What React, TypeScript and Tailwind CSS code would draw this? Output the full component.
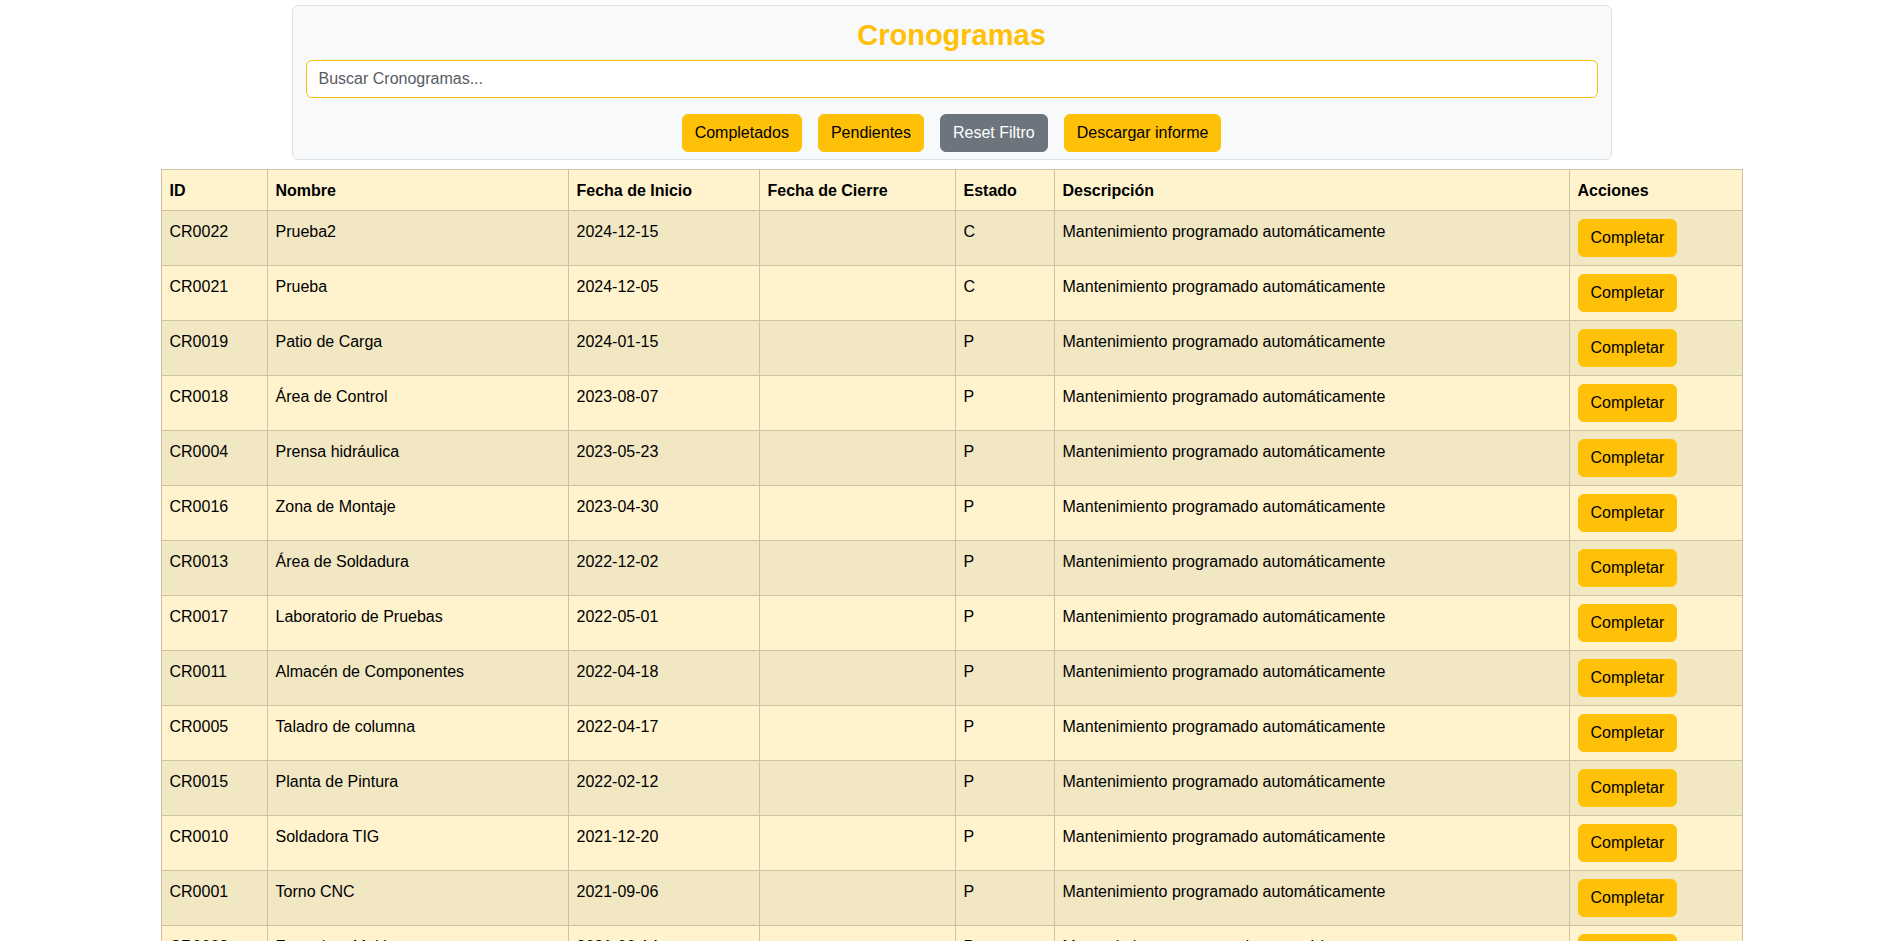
import { useState } from 'react';

type Cronograma = {
  id: string;
  nombre: string;
  inicio: string;
  cierre: string;
  estado: 'C' | 'P';
  descripcion: string;
};

const DESC = 'Mantenimiento programado automáticamente';

const cronogramas: Cronograma[] = [
  { id: 'CR0022', nombre: 'Prueba2', inicio: '2024-12-15', cierre: '', estado: 'C', descripcion: DESC },
  { id: 'CR0021', nombre: 'Prueba', inicio: '2024-12-05', cierre: '', estado: 'C', descripcion: DESC },
  { id: 'CR0019', nombre: 'Patio de Carga', inicio: '2024-01-15', cierre: '', estado: 'P', descripcion: DESC },
  { id: 'CR0018', nombre: 'Área de Control', inicio: '2023-08-07', cierre: '', estado: 'P', descripcion: DESC },
  { id: 'CR0004', nombre: 'Prensa hidráulica', inicio: '2023-05-23', cierre: '', estado: 'P', descripcion: DESC },
  { id: 'CR0016', nombre: 'Zona de Montaje', inicio: '2023-04-30', cierre: '', estado: 'P', descripcion: DESC },
  { id: 'CR0013', nombre: 'Área de Soldadura', inicio: '2022-12-02', cierre: '', estado: 'P', descripcion: DESC },
  { id: 'CR0017', nombre: 'Laboratorio de Pruebas', inicio: '2022-05-01', cierre: '', estado: 'P', descripcion: DESC },
  { id: 'CR0011', nombre: 'Almacén de Componentes', inicio: '2022-04-18', cierre: '', estado: 'P', descripcion: DESC },
  { id: 'CR0005', nombre: 'Taladro de columna', inicio: '2022-04-17', cierre: '', estado: 'P', descripcion: DESC },
  { id: 'CR0015', nombre: 'Planta de Pintura', inicio: '2022-02-12', cierre: '', estado: 'P', descripcion: DESC },
  { id: 'CR0010', nombre: 'Soldadora TIG', inicio: '2021-12-20', cierre: '', estado: 'P', descripcion: DESC },
  { id: 'CR0001', nombre: 'Torno CNC', inicio: '2021-09-06', cierre: '', estado: 'P', descripcion: DESC },
  { id: 'CR0003', nombre: 'Fresadora Multiusos', inicio: '2021-06-14', cierre: '', estado: 'P', descripcion: DESC },
  { id: 'CR0002', nombre: 'Compresor de aire', inicio: '2021-03-10', cierre: '', estado: 'P', descripcion: DESC },
];

const cols = [
  { label: 'ID', w: 'w-[106px]' },
  { label: 'Nombre', w: 'w-[301px]' },
  { label: 'Fecha de Inicio', w: 'w-[191px]' },
  { label: 'Fecha de Cierre', w: 'w-[196px]' },
  { label: 'Estado', w: 'w-[99px]' },
  { label: 'Descripción', w: 'w-[515px]' },
  { label: 'Acciones', w: 'w-[173px]' },
];

// text cells sit a pixel lower than the button cell
const cell = 'border border-[#ccc2a4] px-2 pt-[9px] pb-[7px] align-top';
const btnCell = 'border border-[#ccc2a4] px-2 py-2 align-top';

function WarnButton({ children }: { children: React.ReactNode }) {
  return (
    <button
      type="button"
      className="h-[38px] px-3 rounded-[6px] bg-[#ffc107] border border-[#ffc107] text-black text-base leading-6"
    >
      {children}
    </button>
  );
}

export default function App() {
  const [query, setQuery] = useState('');

  return (
    <div
      className="min-h-screen bg-white text-[#212529]"
      style={{ fontFamily: '"Liberation Sans", Arial, sans-serif' }}
    >
      <div className="w-[1320px] mx-auto pt-[5px]">
        <div className="bg-[#f8f9fa] border border-[#dee2e6] rounded-[6px] px-[13px] pt-[10px] pb-[7px]">
          <h2 className="text-center text-[29px] leading-[38px] font-bold text-[#ffc107] mb-[6px]">
            Cronogramas
          </h2>
          <input
            value={query}
            onChange={(e) => setQuery(e.target.value)}
            placeholder="Buscar Cronogramas..."
            className="block w-full h-[38px] px-3 bg-white border border-[#ffc107] rounded-[6px] text-base outline-none placeholder:text-[#595c5f]"
          />
          <div className="flex justify-center gap-4 mt-4">
            <WarnButton>Completados</WarnButton>
            <WarnButton>Pendientes</WarnButton>
            <button
              type="button"
              className="h-[38px] px-3 rounded-[6px] bg-[#6c757d] border border-[#6c757d] text-white text-base leading-6"
            >
              Reset Filtro
            </button>
            <WarnButton>Descargar informe</WarnButton>
          </div>
        </div>
      </div>

      <table className="w-[1581px] mx-auto mt-[9px] table-fixed border-collapse text-base leading-6 text-black">
        <colgroup>
          {cols.map((c) => (
            <col key={c.label} className={c.w} />
          ))}
        </colgroup>
        <thead>
          <tr className="bg-[#fff3cd]">
            {cols.map((c) => (
              <th key={c.label} className={`${cell} text-left font-bold`}>
                {c.label}
              </th>
            ))}
          </tr>
        </thead>
        <tbody>
          {cronogramas.map((r, i) => (
            <tr key={r.id} className={i % 2 === 0 ? 'bg-[#f2e7c3]' : 'bg-[#fff3cd]'}>
              <td className={cell}>{r.id}</td>
              <td className={cell}>{r.nombre}</td>
              <td className={cell}>{r.inicio}</td>
              <td className={cell}>{r.cierre}</td>
              <td className={cell}>{r.estado}</td>
              <td className={cell}>{r.descripcion}</td>
              <td className={btnCell}>
                <WarnButton>Completar</WarnButton>
              </td>
            </tr>
          ))}
        </tbody>
      </table>
    </div>
  );
}
